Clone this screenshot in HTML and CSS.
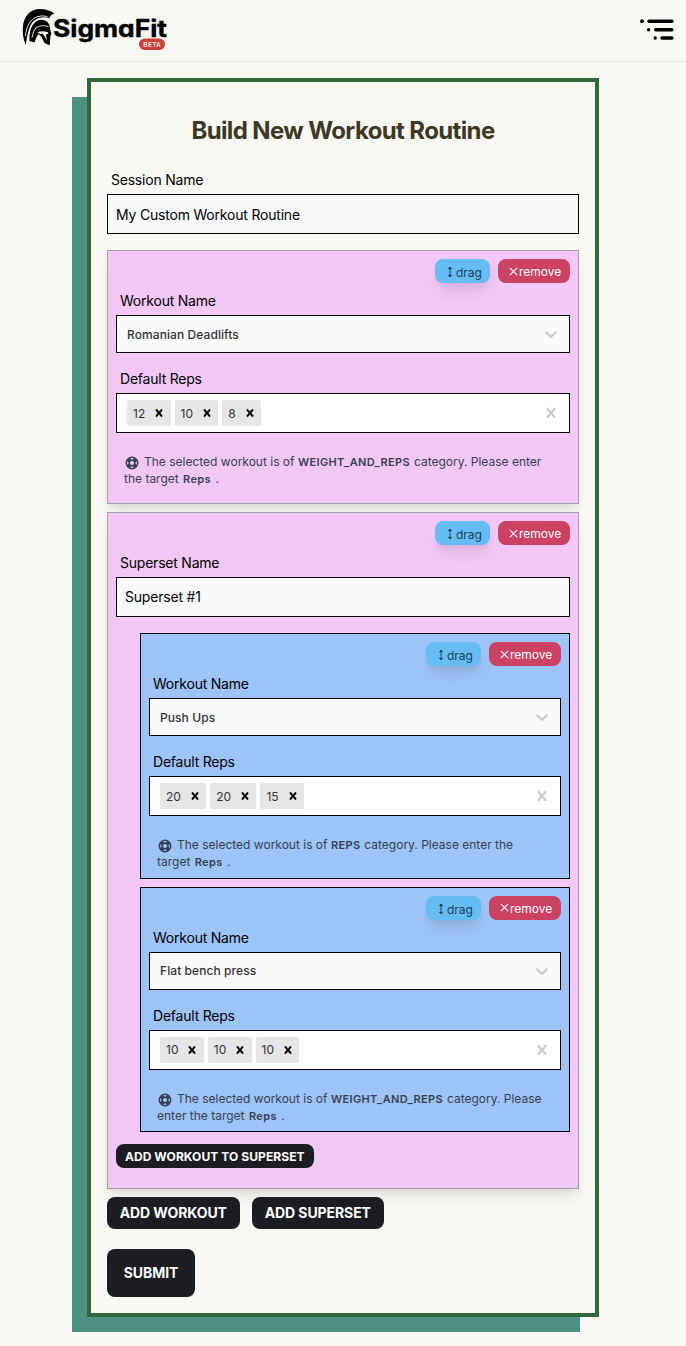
FILE: index.html
```html
<!DOCTYPE html>
<html lang="en">
<head>
<meta charset="utf-8">
<title>SigmaFit</title>
<link rel="stylesheet" href="styles.css">
</head>
<body>
<svg class="defs" aria-hidden="true">
  <symbol id="updown" viewBox="0 0 8 12"><path d="M4 1.500v9M2.500 2.700l1.500-1.700 1.500 1.700zM2.500 9.300l1.500 1.700 1.500-1.700z" fill="currentColor" stroke="currentColor" stroke-width=".9"/></symbol>
  <symbol id="times" viewBox="0 0 9 9"><path d="M.8.8l7.4 7.4M8.2.8L.8 8.2" fill="none" stroke="currentColor" stroke-width="1.1"/></symbol>
  <symbol id="cross" viewBox="0 0 20 20"><path d="M14.348 14.849c-0.469 0.469-1.229 0.469-1.697 0l-2.651-3.030-2.651 3.029c-0.469 0.469-1.229 0.469-1.697 0-0.469-0.469-0.469-1.229 0-1.697l2.758-3.15-2.759-3.152c-0.469-0.469-0.469-1.228 0-1.697s1.228-0.469 1.697 0l2.652 3.031 2.651-3.031c0.469-0.469 1.228-0.469 1.697 0s0.469 1.229 0 1.697l-2.758 3.152 2.758 3.15c0.469 0.469 0.469 1.229 0 1.698z" fill="currentColor"/></symbol>
  <symbol id="chevron" viewBox="0 0 20 20"><path d="M4.516 7.548c0.436-0.446 1.043-0.481 1.576 0l3.908 3.747 3.908-3.747c0.533-0.481 1.141-0.446 1.574 0 0.436 0.445 0.408 1.197 0 1.615-0.406 0.418-4.695 4.502-4.695 4.502-0.217 0.223-0.502 0.335-0.787 0.335s-0.57-0.112-0.789-0.335c0 0-4.287-4.084-4.695-4.502s-0.436-1.17 0-1.615z" fill="currentColor"/></symbol>
  <symbol id="buoy" viewBox="0 0 14 14"><g fill="none" stroke="currentColor"><circle cx="7" cy="7" r="5.700" stroke-width="1.500"/><circle cx="7" cy="7" r="2.800" stroke-width="1.500"/><path d="M2.900 2.900l2.200 2.200M11.100 2.900L8.900 5.100M2.900 11.100l2.200-2.200M11.100 11.100L8.900 8.900" stroke-width="4"/></g></symbol>
</svg>

<header class="navbar">
  <svg class="logo" width="150" height="48" viewBox="0 0 150 48">
    <path d="M3.800 41C1.500 36 .3 30 .9 23C1.500 13 8 5 17.500 5C24 5 28.500 6.500 32.300 9.500C29.500 10.500 28 12 27.300 14.200C21 11.800 13 14 9.300 20C6.300 25 5.200 32 3.800 41Z"/>
    <path d="M7.500 37C7 30 8.500 24 11.500 20C14.500 16 20 14.500 24 17C26.500 18.500 27.800 21 28 24L29.300 30.500L28.500 31.500L27.700 41.300L22.500 39L19.500 33L16.500 30L14.500 33L12.500 38.500Z"/>
    <path class="cut" d="M3.500 32C4.500 22 8 15.500 15 12.800Q20 11 25.500 12.500M13.500 24.500Q18.500 20 26.500 22.500M10 33.500Q11 27 14 23.500"/>
    <path class="gap" d="M15.500 28.500Q20 26.200 25.500 28L26.700 29.500L24 30.500L25 36.500L22.700 32.500L21 30L17.500 29.700Z"/>
    <text class="wordmark" x="31" y="33" textLength="114" lengthAdjust="spacingAndGlyphs">SigmaFit</text>
    <rect x="117" y="34.500" width="26" height="11.500" rx="5.750" fill="#cf3f36"/>
    <text class="beta" x="121.300" y="42.800" textLength="17.500">BETA</text>
  </svg>
  <svg class="menu" width="36" height="24" viewBox="0 0 36 24">
    <g stroke="#000" stroke-width="3.600" stroke-linecap="round"><path d="M9 3.200H32M15.800 11.800H31.800M22 20H31.800"/></g>
    <circle cx="2" cy="3.200" r="1.900"/><circle cx="8.600" cy="11.800" r="1.700"/><circle cx="15.200" cy="20" r="1.700"/>
  </svg>
</header>

<main class="panel">
  <h1 class="title">Build New Workout Routine</h1>
  <label class="label">Session Name</label>
  <div class="input">My Custom Workout Routine</div>

  <section class="card workout">
    <div class="actions"><span class="btn drag"><svg width="8" height="12"><use href="#updown"/></svg><span class="drag-text">drag</span></span><span class="btn remove"><svg width="9" height="9"><use href="#times"/></svg><span class="remove-text">remove</span></span></div>
    <label class="label first">Workout Name</label>
    <div class="select"><span class="value">Romanian Deadlifts</span><svg width="20" height="20"><use href="#chevron"/></svg></div>
    <label class="label second">Default Reps</label>
    <div class="multi"><span class="chip">12<svg width="14" height="14"><use href="#cross"/></svg></span><span class="chip">10<svg width="14" height="14"><use href="#cross"/></svg></span><span class="chip">8<svg width="14" height="14"><use href="#cross"/></svg></span><svg class="clear" width="20" height="20"><use href="#cross"/></svg></div>
    <p class="info"><svg width="14" height="14"><use href="#buoy"/></svg>The selected workout is of <b>WEIGHT_AND_REPS</b> category. Please enter<br>the target <b class="unit">Reps</b> .</p>
  </section>

  <section class="card superset">
    <div class="actions"><span class="btn drag"><svg width="8" height="12"><use href="#updown"/></svg><span class="drag-text">drag</span></span><span class="btn remove"><svg width="9" height="9"><use href="#times"/></svg><span class="remove-text">remove</span></span></div>
    <label class="label first">Superset Name</label>
    <div class="input superset-name">Superset #1</div>
    <div class="nested-list">
      <section class="nested">
        <div class="actions"><span class="btn drag"><svg width="8" height="12"><use href="#updown"/></svg><span class="drag-text">drag</span></span><span class="btn remove"><svg width="9" height="9"><use href="#times"/></svg><span class="remove-text">remove</span></span></div>
        <label class="label first">Workout Name</label>
        <div class="select"><span class="value">Push Ups</span><svg width="20" height="20"><use href="#chevron"/></svg></div>
        <label class="label second">Default Reps</label>
        <div class="multi"><span class="chip">20<svg width="14" height="14"><use href="#cross"/></svg></span><span class="chip">20<svg width="14" height="14"><use href="#cross"/></svg></span><span class="chip">15<svg width="14" height="14"><use href="#cross"/></svg></span><svg class="clear" width="20" height="20"><use href="#cross"/></svg></div>
        <p class="info"><svg width="14" height="14"><use href="#buoy"/></svg>The selected workout is of <b>REPS</b> category. Please enter the<br>target <b class="unit">Reps</b> .</p>
      </section>
      <section class="nested">
        <div class="actions"><span class="btn drag"><svg width="8" height="12"><use href="#updown"/></svg><span class="drag-text">drag</span></span><span class="btn remove"><svg width="9" height="9"><use href="#times"/></svg><span class="remove-text">remove</span></span></div>
        <label class="label first">Workout Name</label>
        <div class="select"><span class="value">Flat bench press</span><svg width="20" height="20"><use href="#chevron"/></svg></div>
        <label class="label second">Default Reps</label>
        <div class="multi"><span class="chip">10<svg width="14" height="14"><use href="#cross"/></svg></span><span class="chip">10<svg width="14" height="14"><use href="#cross"/></svg></span><span class="chip">10<svg width="14" height="14"><use href="#cross"/></svg></span><svg class="clear" width="20" height="20"><use href="#cross"/></svg></div>
        <p class="info"><svg width="14" height="14"><use href="#buoy"/></svg>The selected workout is of <b>WEIGHT_AND_REPS</b> category. Please<br>enter the target <b class="unit">Reps</b> .</p>
      </section>
    </div>
    <span class="dark small">ADD WORKOUT TO SUPERSET</span>
  </section>

  <div class="adds"><span class="dark add-workout">ADD WORKOUT</span><span class="dark add-superset">ADD SUPERSET</span></div>
  <span class="dark submit">SUBMIT</span>
</main>
</body>
</html>
```
FILE: styles.css
```css
* { box-sizing: border-box; }
body { margin: 0; height: 1346px; overflow: hidden; background: #f9f8f2; color: #000; font-family: Inter, "Liberation Sans", sans-serif; font-size: 14px; }
svg { display: block; flex: none; }
.defs { display: none; }

.navbar { height: 62px; border-bottom: 1px solid #e5e6e8; display: flex; justify-content: space-between; padding: 4px 10px 0 22px; }
.menu { margin-top: 14px; }
.cut { fill: none; stroke: #f9f8f2; stroke-width: .9; }
.gap { fill: #f9f8f2; }
.wordmark { font-size: 24px; font-weight: 700; font-feature-settings: "cv11"; stroke: #000; stroke-width: .4; }
.beta { font-size: 6.6px; font-weight: 500; fill: #fff; }

.panel { width: 512px; height: 1239px; margin: 16px 0 0 87px; border: 4px solid #32673a; padding: 32px 16px 0; background: #f9f8f2; box-shadow: -17px 17px 0 -2px #4c9181; }
.title { margin: 0 0 20px; height: 32px; line-height: 34px; font-size: 24px; font-weight: 700; text-align: center; color: #3d3825; letter-spacing: -.62px; white-space: nowrap; }
.label { display: block; height: 28px; line-height: 28px; padding-left: 4px; letter-spacing: -.22px; }
.first { margin-top: 4px; }
.second { margin-top: 12px; }
.input { height: 40px; border: 1px solid #000; background: #f9fafc; line-height: 40px; padding-left: 8px; letter-spacing: -.2px; }
.superset-name { line-height: 38px; }

.card { border: 1px solid #9ca3af; background: #f3c8f7; padding: 8px; box-shadow: 0 10px 15px -3px rgba(0,0,0,.1), 0 4px 6px -2px rgba(0,0,0,.05); }
.workout { margin-top: 16px; height: 254px; }
.superset { margin-top: 8px; height: 677px; }
.actions { display: flex; justify-content: flex-end; gap: 8px; height: 24px; }
.btn { height: 24px; border-radius: 8px; display: flex; align-items: center; font-size: 12px; }
.drag { width: 55.500px; padding-left: 11px; gap: 2px; background: #66bdf3; color: #173f5a; box-shadow: 0 10px 15px -3px rgba(0,0,0,.1), 0 4px 6px -2px rgba(0,0,0,.05); }
.drag-text { padding-top: 3px; }
.drag svg { margin-top: 2px; }
.remove { width: 71.600px; padding-left: 10.600px; gap: 1px; background: #cc4262; color: #fff; }
.remove-text { padding-top: 1px; }

.select { height: 38px; border: 1px solid #000; background: #f9fafc; display: flex; align-items: center; justify-content: space-between; padding: 0 8px 0 10px; font-size: 12px; font-weight: 500; color: #333; }
.value { letter-spacing: .08px; }
.select svg, .clear { color: #ccc; }
.multi { height: 40px; border: 1px solid #000; background: #fff; display: flex; align-items: center; gap: 4px; padding: 0 8px 0 10px; }
.chip { height: 26px; border-radius: 2px; background: #e6e6e6; color: #333; display: flex; align-items: center; gap: 7px; padding: 0 4.300px 0 6px; font-size: 12px; }
.chip svg { color: #000; stroke: currentColor; stroke-width: .6; }
.clear { margin-left: auto; }
.info { margin: 20px 0 0; padding-left: 8px; line-height: 17px; font-size: 12px; color: #374151; white-space: nowrap; }
.info svg { display: inline-block; vertical-align: -3px; margin: -2px 5px -1px 1px; }
.info b { font-size: 11px; line-height: 1; font-weight: 600; letter-spacing: .37px; padding-right: .5px; }
.info .unit { padding: 0 1px; }

.nested-list { margin: 16px 0 0 24px; display: flex; flex-direction: column; gap: 8px; }
.nested { height: 245.600px; border: 1px solid #000; background: #9dc4f8; padding: 8px; }

.dark { display: flex; align-items: center; justify-content: center; background: #1b1d23; color: #fff; font-weight: 700; letter-spacing: -.08px; border-radius: 8px; white-space: nowrap; padding-bottom: 1px; }
.small { width: 197.500px; height: 24px; margin-top: 12px; padding-bottom: 0; font-size: 12px; letter-spacing: .08px; }
.adds { display: flex; gap: 12px; margin-top: 8px; }
.add-workout { width: 132.500px; height: 32px; }
.add-superset { width: 132.500px; height: 32px; }
.submit { width: 88px; height: 48px; margin-top: 20px; }
```
